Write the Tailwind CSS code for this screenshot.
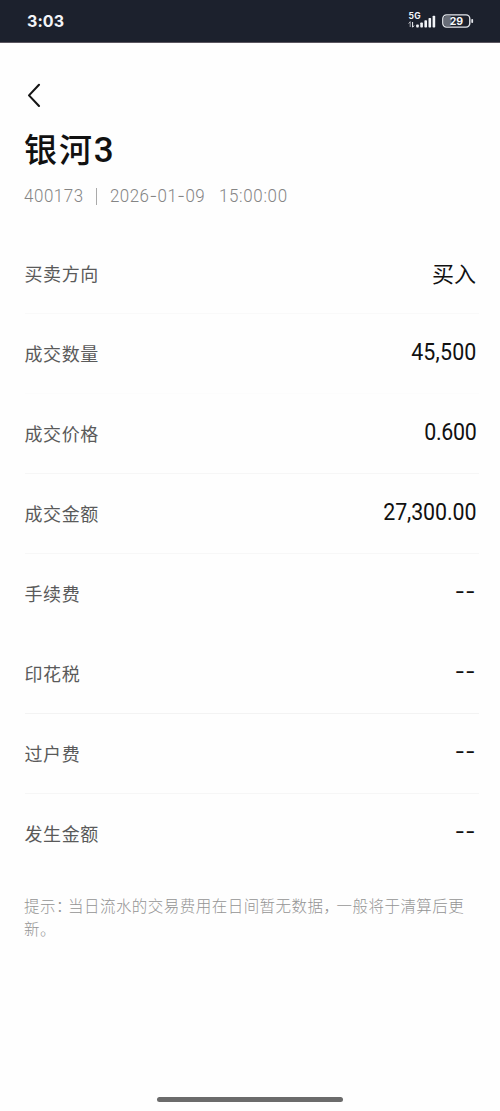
<!DOCTYPE html>
<html lang="zh-CN">
<head>
<meta charset="utf-8">
<title>银河3</title>
<script src="https://cdn.jsdelivr.net/npm/@tailwindcss/browser@4"></script>
</head>
<body class="bg-[#fefefe]">
<div class="flex h-[1111px] w-[500px] flex-col overflow-hidden bg-[#fefefe] font-['Roboto','Noto_Sans_CJK_SC',sans-serif] text-[#111]">
  <header class="flex h-[43px] shrink-0 items-center justify-between border-b border-[#5b5660] bg-[#1c212d] pr-[26px] pl-[27px] text-[#f2f4f8]">
    <span class="font-['Inter',sans-serif] text-[16px] leading-5 font-bold tracking-[0.1px]">3:03</span>
    <div class="flex items-center gap-[5px]">
      <svg class="h-[18px] w-[29px]" viewBox="0 0 29 18" fill="currentColor">
        <text x="0.6" y="7" font-family="Inter" font-size="8.5" font-weight="700" textLength="12">5G</text>
        <path d="M2.2 9.5v5.5M0.6 11.6L2.2 9.8" stroke="currentColor" stroke-width="1" fill="none" opacity=".65"/>
        <path d="M4.6 10v5.2l1.4-1.6" stroke="currentColor" stroke-width="1" fill="none"/>
        <rect x="8.2" y="12.5" width="2.6" height="3" rx=".7"/><rect x="12.3" y="10.5" width="2.6" height="5" rx=".7"/><rect x="16.4" y="8.3" width="2.6" height="7.2" rx=".7"/><rect x="20.5" y="6" width="2.6" height="9.5" rx=".7"/><rect x="24.6" y="3.7" width="2.6" height="11.8" rx=".7"/>
      </svg>
      <svg class="h-[14px] w-[32px]" viewBox="0 0 32 14">
        <rect x="2" y="2" width="7.5" height="10" rx="2" fill="#686d77"/>
        <rect x=".8" y=".9" width="27" height="12.2" rx="3.8" fill="none" stroke="#e3e6eb" stroke-width="1.4"/>
        <rect x="29.3" y="5" width="1.8" height="4" rx=".8" fill="#e3e6eb"/>
        <text x="14.4" y="10.9" text-anchor="middle" font-family="Inter" font-size="10.5" font-weight="700" fill="#f6f7f9">29</text>
      </svg>
    </div>
  </header>
  <div class="pt-[40px] pl-[27px]">
    <svg class="h-[25px] w-[15px]" viewBox="0 0 15 25" fill="none" stroke="#151515" stroke-width="2.1" stroke-linecap="round" stroke-linejoin="round"><path d="M12 1.8L2 12.4l10 10.6"/></svg>
  </div>
  <h1 class="mt-[19px] ml-[24px] flex h-[48px] items-center text-[33px] leading-[48px] font-medium whitespace-nowrap"><span class="tracking-[1.9px]">银河</span><span class="text-[35px]">3</span></h1>
  <p class="mt-[9px] ml-6 flex h-6 items-center text-[18px] leading-6 font-light whitespace-nowrap text-[#858585]"><span class="w-[72px] origin-left scale-x-[.94] tracking-[0.6px]">400173</span><span class="h-[17px] w-px bg-[#aaa]"></span><span class="ml-[13px] w-[109px] origin-left scale-x-[.94] tracking-[0.5px]">2026<span class="font-['Inter']">-</span>01<span class="font-['Inter']">-</span>09</span><span class="origin-left scale-x-[.94] tracking-[0.7px]">15:00:00</span></p>
  <main class="mt-[26px] mr-[21px] ml-[24.5px] text-[22px] [&_dd]:pr-[3px] [&_dt]:pt-[2px] [&_dt]:text-[18px] [&_dt]:leading-6 [&_dt]:tracking-[0.6px] [&_dt]:text-[#5a5a5a]">
    <dl class="flex h-[80px] items-center justify-between border-b border-[#f9f9f9]"><dt>买卖方向</dt><dd class="pt-[2px]">买入</dd></dl>
    <dl class="flex h-[80px] items-center justify-between border-b border-[#fcfcfc]"><dt>成交数量</dt><dd class="origin-right scale-x-[.93] pb-px text-[23px] tracking-[0.2px]">45,500</dd></dl>
    <dl class="flex h-[80px] items-center justify-between border-b border-[#f6f6f6]"><dt>成交价格</dt><dd class="origin-right scale-x-[.93] pb-px text-[23px] tracking-[-0.3px]">0.600</dd></dl>
    <dl class="flex h-[80px] items-center justify-between border-b border-[#f7f7f7]"><dt>成交金额</dt><dd class="origin-right scale-x-[.93] pb-px text-[23px] tracking-[-0.1px]">27,300.00</dd></dl>
    <dl class="flex h-[80px] items-center justify-between border-b border-transparent"><dt>手续费</dt><dd class="pb-[5px] font-['Inter'] tracking-[0.5px]">--</dd></dl>
    <dl class="flex h-[80px] items-center justify-between border-b border-[#f3f3f3]"><dt>印花税</dt><dd class="pb-[5px] font-['Inter'] tracking-[0.5px]">--</dd></dl>
    <dl class="flex h-[80px] items-center justify-between border-b border-[#f6f6f6]"><dt>过户费</dt><dd class="pb-[5px] font-['Inter'] tracking-[0.5px]">--</dd></dl>
    <dl class="flex h-[80px] items-center justify-between border-b border-transparent"><dt>发生金额</dt><dd class="pb-[5px] font-['Inter'] tracking-[0.5px]">--</dd></dl>
  </main>
  <p class="mt-[22px] ml-6 text-[15.5px] leading-[23px] font-light tracking-[0.47px] whitespace-nowrap text-[#949494]">提示<span class="tracking-[-3.5px]">：</span>当日流水的交易费用在日间暂无数据<span class="tracking-[-2.5px]">，</span>一般将于清算后更<br>新。</p>
  <div class="mt-auto mb-[9px] ml-[157px] h-[5px] w-[186px] rounded-full bg-[#6b6b6b]"></div>
</div>
</body>
</html>
